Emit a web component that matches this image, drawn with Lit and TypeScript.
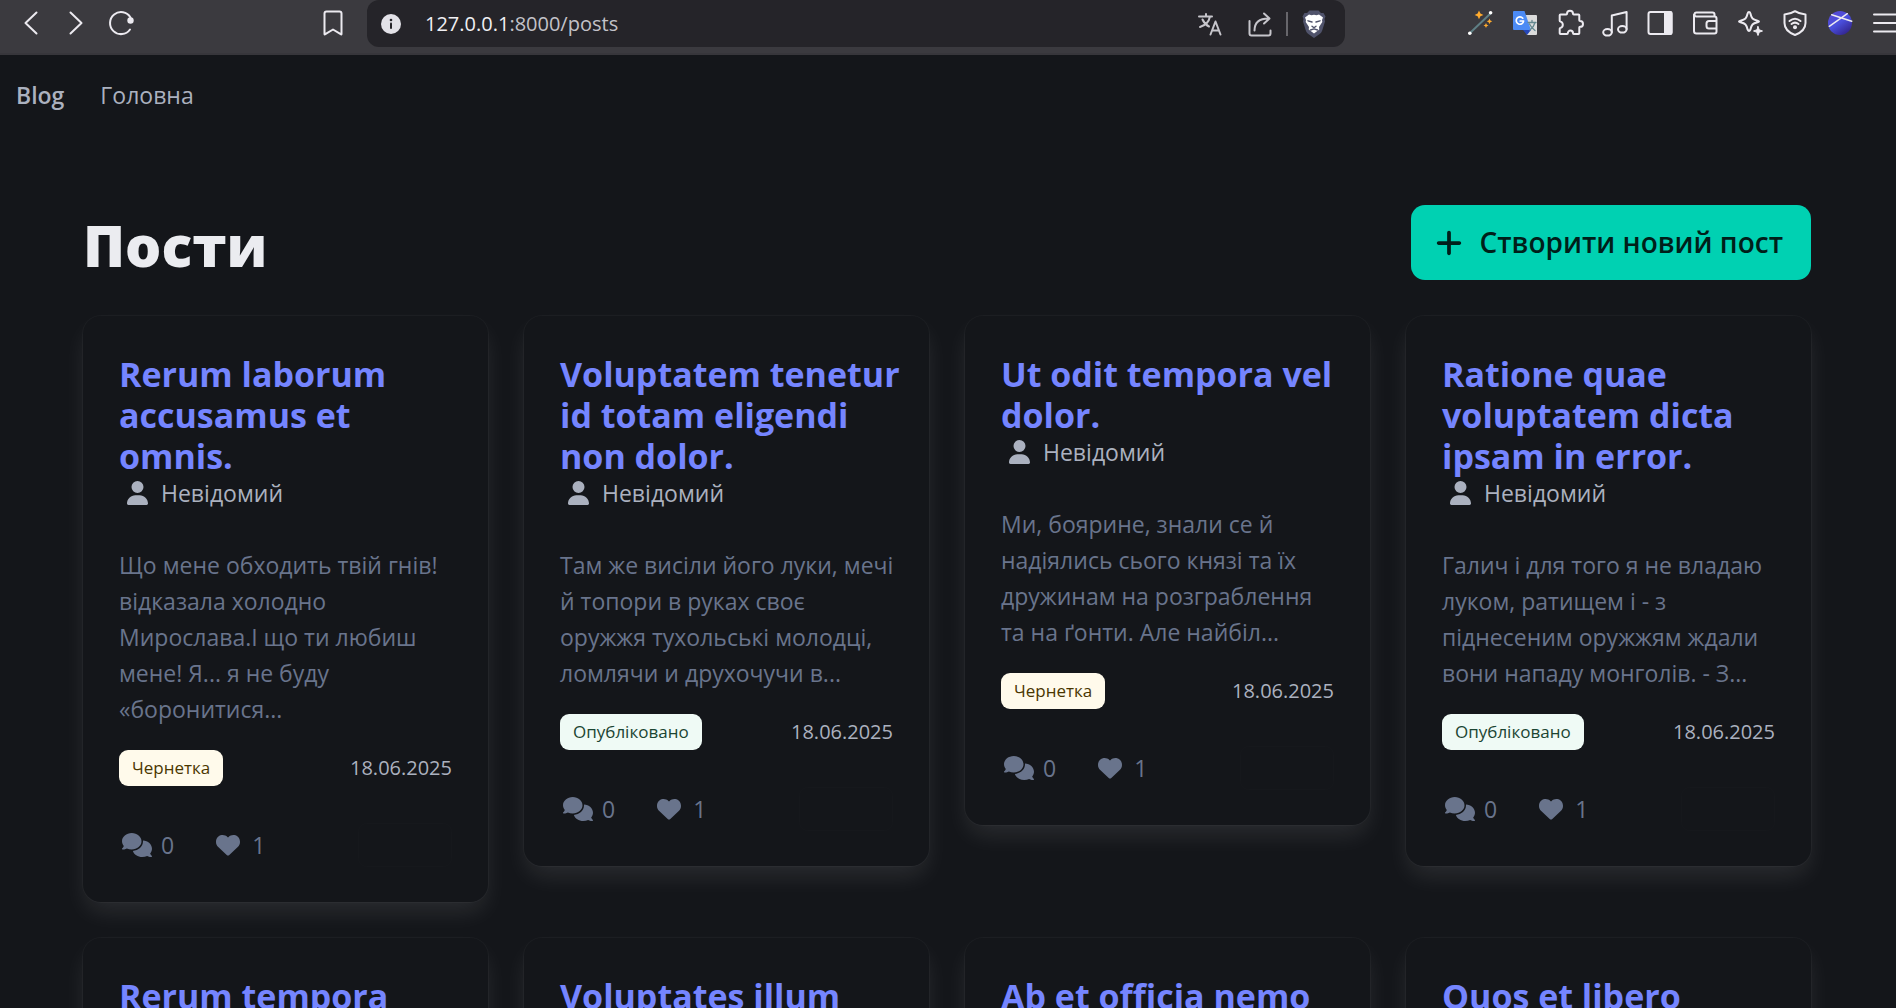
import { LitElement, html, css, svg, nothing } from "lit";
import { customElement, property } from "lit/decorators.js";

interface Post {
  title: string;
  author?: string;
  excerpt?: string;
  published?: boolean;
  date?: string;
  comments?: number;
  likes?: number;
}

const POSTS: Post[] = [
  {
    title: "Rerum laborum accusamus et omnis.",
    author: "Невідомий",
    excerpt: "Що мене обходить твій гнів! відказала холодно Мирослава.І що ти любиш мене! Я... я не буду «боронитися...",
    published: false, date: "18.06.2025", comments: 0, likes: 1,
  },
  {
    title: "Voluptatem tenetur id totam eligendi non dolor.",
    author: "Невідомий",
    excerpt: "Там же висіли його луки, мечі й топори в руках своє оружжя тухольські молодці, ломлячи и друхочучи в...",
    published: true, date: "18.06.2025", comments: 0, likes: 1,
  },
  {
    title: "Ut odit tempora vel dolor.",
    author: "Невідомий",
    excerpt: "Ми, боярине, знали се й надіялись сього князі та їх дружинам на розграблення та на ґонти. Але найбіл...",
    published: false, date: "18.06.2025", comments: 0, likes: 1,
  },
  {
    title: "Ratione quae voluptatem dicta ipsam in error.",
    author: "Невідомий",
    excerpt: "Галич і для того я не владаю луком, ратищем і - з піднесеним оружжям ждали вони нападу монголів. - З...",
    published: true, date: "18.06.2025", comments: 0, likes: 1,
  },
  { title: "Rerum tempora" },
  { title: "Voluptates illum" },
  { title: "Ab et officia nemo" },
  { title: "Quos et libero" },
];

const userIcon = svg`<path d="M224 256A128 128 0 1 0 224 0a128 128 0 1 0 0 256zm-45.7 48C79.8 304 0 383.8 0 482.3C0 498.7 13.3 512 29.7 512H418.3c16.4 0 29.7-13.3 29.7-29.7C448 383.8 368.2 304 269.7 304H178.3z"/>`;
const heartIcon = svg`<path d="M47.6 300.4L228.3 469.1c7.5 7 17.4 10.9 27.7 10.9s20.2-3.9 27.7-10.9L464.4 300.4c30.4-28.3 47.6-68 47.6-109.5v-5.8c0-69.9-50.5-129.5-119.4-141C347 36.5 300.6 51.4 268 84L256 96 244 84c-32.6-32.6-79-47.5-124.6-39.9C50.5 55.6 0 115.2 0 185.1v5.8c0 41.5 17.2 81.2 47.6 109.5z"/>`;
const commentsIcon = svg`<path d="M208 352c114.9 0 208-78.8 208-176S322.9 0 208 0S0 78.8 0 176c0 38.6 14.7 74.3 39.6 103.4c-3.5 9.4-8.7 17.7-14.2 24.7c-4.8 6.2-9.7 11-13.3 14.3c-1.8 1.6-3.3 2.9-4.3 3.7c-.5 .4-.9 .7-1.1 .8l-.2 .2C1 327.2-1.4 334.4 .8 340.9S9.1 352 16 352c21.8 0 43.8-5.6 62.1-12.5c9.2-3.5 17.8-7.4 25.3-11.4C134.1 343.3 169.8 352 208 352zM448 176c0 112.3-99.1 196.9-216.5 207C255.8 457.4 336.4 512 432 512c38.2 0 73.9-8.7 104.7-23.9c7.5 4 16 7.9 25.2 11.4c18.3 6.9 40.3 12.5 62.1 12.5c6.9 0 13.1-4.5 15.2-11.1c2.1-6.6-.2-13.8-5.8-17.9l-.2-.2c-.2-.2-.6-.4-1.1-.8c-1-.8-2.5-2-4.3-3.7c-3.6-3.3-8.5-8.1-13.3-14.3c-5.5-7-10.7-15.4-14.2-24.7c24.9-29 39.6-64.7 39.6-103.4c0-92.8-84.9-168.9-192.6-175.5c.4 5.1 .6 10.3 .6 15.5z"/>`;
const plusIcon = svg`<path d="M256 80c0-17.7-14.3-32-32-32s-32 14.3-32 32V224H48c-17.7 0-32 14.3-32 32s14.3 32 32 32H192V432c0 17.7 14.3 32 32 32s32-14.3 32-32V288H400c17.7 0 32-14.3 32-32s-14.3-32-32-32H256V80z"/>`;

/* Toolbar glyphs, drawn on a 26 by 26 grid. */
const toolIcons: Record<string, unknown> = {
  back: svg`<path d="M18.500 2.500L7.500 13L18.500 23.500"/>`,
  forward: svg`<path d="M7.500 2.500L18.500 13L7.500 23.500"/>`,
  reload: svg`<path d="M22 19.500A11 11 0 1 1 22.500 7.500"/><circle cx="22.500" cy="10.500" r="3.200" fill="currentColor" stroke="none"/>`,
  bookmark: svg`<path d="M6.500 1.500h13q2 0 2 2v20.500q0 .8-.8 .2L13 19.500L5.300 24.200q-.8 .6-.8-.2V3.500q0-2 2-2z"/>`,
  translate: svg`<g stroke-width="2"><path d="M2 5.500h13M9 3v2.500M13 5.500c-1 5-5 9-10 10.500M5.500 8.500c1.500 3.500 3.500 5.500 6.500 7"/><path d="M13.500 23.500l5-13l5 13M15.300 19.500h6.400"/></g>`,
  share: svg`<path d="M2.500 10v12.500q0 2 2 2h17q2 0 2-2v-3"/><path d="M7.500 19.500C7.500 12 12 7.500 21.500 7.500M17 2.500l5.500 5l-5.500 5"/>`,
  wand: svg`<path d="M3 23L24 3" stroke="#5f7f85" stroke-width="2"/><g stroke="none"><circle cx="2.800" cy="23.300" r="1.800" fill="#fff"/><circle cx="23.600" cy="2.800" r="1.800" fill="#fff"/><path fill="#ffab2e" d="M12 .5l1.400 3l3 1.400l-3 1.400l-1.400 3l-1.400-3l-3-1.400l3-1.400zM22.500 8.500l.9 1.900l1.900 .9l-1.900 .9l-.9 1.900l-.9-1.900l-1.900-.9l1.900-.9zM19 13l.8 1.700l1.700 .8l-1.700 .8l-.8 1.700l-.8-1.700l-1.700-.8l1.700-.8z"/></g>`,
  gtranslate: svg`<g stroke="none"><path fill="#dcdcdc" d="M9 5h15q1 0 1 1v18q0 1-1 1H15z"/><path fill="#2546b8" d="M11 20h8l-4 5z"/><path fill="#4c8bf5" d="M2 1h10.500L19 20H2q-1 0-1-1V2q0-1 1-1z"/></g><g fill="none" stroke="#64888f" stroke-width="1.300"><path d="M16 12.500h8M20 10.500v2M23 12.500c-1 4-3 6-5 7.500M17.500 14c1.500 3 3.500 5 5.500 6.500"/></g><path d="M10.800 8.200A3.700 3.700 0 1 0 11.600 11H8.200" fill="none" stroke="#fff" stroke-width="1.700"/>`,
  puzzle: svg`<path d="M3.500 4.500h5.800q.7 0 .7-.8a3 3 0 0 1 6 0q0 .8 .7 .8h4.800q.8 0 .8 .8v4.900q0 .8 .8 .8a2.800 2.800 0 0 1 0 5.800q-.8 0-.8 .8v5.600q0 .8-.8 .8h-4.700q-.8 0-.8-.8a2.600 2.600 0 0 0-5.200 0q0 .8-.8 .8H3.500q-.8 0-.8-.8v-4.500q0-.8 .8-.8a3.300 3.300 0 0 0 0-6.300q-.8 0-.8-.8V5.300q0-.8 .8-.8z"/>`,
  music: svg`<ellipse cx="5.500" cy="22.300" rx="4.300" ry="3.300"/><ellipse cx="20.300" cy="19.300" rx="4.300" ry="3.300"/><path d="M9.800 22V5.500L24.600 2V19"/>`,
  sidebar: svg`<rect x="1.500" y="2" width="23" height="22" rx="2"/><path d="M18 2h5.500q1 0 1 1v20q0 1-1 1H18z" fill="currentColor"/>`,
  wallet: svg`<path d="M22.500 6.500V4.500q0-2-2-2h-16a2 2 0 0 0 0 4h18q2 0 2 2v13q0 2-2 2h-18q-2.500 0-2.500-2.500V4.500M24.500 11h-7.500q-2.500 0-2.500 2.500v2.500q0 2.500 2.500 2.500h7.500"/>`,
  sparkle: svg`<path d="M12 2q1 0 1.400 1.500c1.200 5 2.100 6 7.100 7.200q3 .8 0 1.600c-5 1.200-5.900 2.200-7.100 7.200q-1.400 3-2.800 0c-1.200-5-2.100-6-7.100-7.200q-3-.8 0-1.600c5-1.200 5.900-2.200 7.100-7.200Q11 2 12 2z"/><path d="M21 16.500l1.200 3.300l3.300 1.200l-3.300 1.200L21 25.500l-1.200-3.300l-3.300-1.200l3.300-1.200z" fill="currentColor" stroke-width="1"/>`,
  shield: svg`<path d="M13 1.200q4.500 3 10.500 3.300v8.500q0 8-10.500 12q-10.500-4-10.500-12V4.500Q8.500 4.200 13 1.200z"/><path d="M7.500 11q5.500-4.500 11 0M9.500 14q3.500-2.800 7 0"/><circle cx="13" cy="17.300" r="2" fill="currentColor" stroke="none"/>`,
  orb: svg`<defs><linearGradient id="orb" x1="0" y1="0" x2="0.700" y2="1"><stop offset="0" stop-color="#5a48d0"/><stop offset="0.550" stop-color="#4a4fdd"/><stop offset="1" stop-color="#33258f"/></linearGradient></defs><circle cx="13" cy="13" r="12" fill="url(#orb)" stroke="none"/><path d="M2.300 16.300L20.300 3.700M4.700 4.700L24.700 11.300" stroke-width="1.500"/>`,
  menu: svg`<path d="M2 4.500h26M2 13h26M2 21.500h26"/>`,
  lion: svg`<path d="M8.500-.5h9l2.500 2.500h2.500l2 3.500l-1 2.500l.5 2.500l-2.800 9q-.5 2-2.200 3.200L13 27l-6-4.300q-1.700-1.200-2.200-3.200L2 10.500L2.500 8l-1-2.500l2-3.500H6z" fill="#50536b" stroke="none"/><path d="M8 3.500l2.500 .8l2.500-.5l2.500 .5l2.500-.8l4 3l-1 2.500l.3 2l-3.300 5l.3 2.500L13 22.500l-5.300-4l.3-2.500l-3.300-5l.3-2l-1-2.500z" fill="#fff" stroke="none"/><path d="M7 9.800l4 1.200M19 9.800l-4 1.200M11 15.200l2 1.600l2-1.600M9.500 19l3.500-1.200l3.500 1.200" fill="none" stroke="#50536b" stroke-width="1.400"/>`,
};

const tool = (name: string) =>
  html`<svg class="tool" viewBox="0 0 26 26" aria-hidden="true">${toolIcons[name]}</svg>`;

@customElement("browser-toolbar")
class BrowserToolbar extends LitElement {
  static styles = css`
    :host { display: block; }
    .bar {
      display: flex;
      align-items: flex-start;
      height: 55px;
      box-sizing: border-box;
      border-bottom: 2px solid #37363b;
      background: #3b3a3f;
      color: #eceaf0;
      overflow: hidden;
    }
    button {
      display: flex;
      flex: none;
      padding: 0;
      border: 0;
      background: none;
      color: inherit;
    }
    .tool {
      display: block;
      flex: none;
      width: 26px;
      height: 26px;
      overflow: visible;
      fill: none;
      stroke: currentColor;
      stroke-width: 2;
      stroke-linecap: round;
      stroke-linejoin: round;
    }
    .nav { display: flex; gap: 19px; padding: 10px 0 0 18px; }
    .mark { padding: 10px 21px 0 186px; }
    .field {
      display: flex;
      flex: 1;
      align-items: center;
      min-width: 0;
      height: 47px;
      padding: 0 18px 0 14px;
      border-radius: 12px;
      background: #252429;
      box-sizing: border-box;
    }
    .info { flex: none; width: 20px; height: 20px; }
    .address {
      flex: 1;
      min-width: 0;
      margin: 0 12px 0 24px;
      color: #c3c2c8;
      font: 20px/28px "Open Sans", "Noto Sans", sans-serif;
    }
    .host { color: #f0eff3; }
    .inner { display: flex; align-items: center; gap: 24px; color: #c6c5cb; }
    .split { display: flex; align-items: center; gap: 13px; }
    .rule { width: 2px; height: 24px; background: #67666b; }
    .tools { display: flex; gap: 19px; padding: 10px 0 0 122px; margin-right: -2px; }
  `;

  render() {
    const names = ["wand", "gtranslate", "puzzle", "music", "sidebar", "wallet", "sparkle", "shield", "orb", "menu"];
    return html`
      <header class="bar">
        <div class="nav">
          <button aria-label="Back">${tool("back")}</button>
          <button aria-label="Forward">${tool("forward")}</button>
          <button aria-label="Reload">${tool("reload")}</button>
        </div>
        <button class="mark" aria-label="Bookmark">${tool("bookmark")}</button>
        <div class="field">
          <svg class="info" viewBox="0 0 20 20" aria-hidden="true">
            <circle cx="10" cy="10" r="10" fill="#e3e2e8"/>
            <circle cx="10" cy="6" r="1.300" fill="#252429"/>
            <rect x="9" y="8.500" width="2" height="6.500" rx="1" fill="#252429"/>
          </svg>
          <div class="address"><span class="host">127.0.0.1</span>:8000/posts</div>
          <div class="inner">
            <button aria-label="Translate">${tool("translate")}</button>
            <div class="split">
              <button aria-label="Share">${tool("share")}</button>
              <span class="rule"></span>
              <button aria-label="Shields">${tool("lion")}</button>
            </div>
          </div>
        </div>
        <div class="tools">${names.map((n) => html`<button aria-label=${n}>${tool(n)}</button>`)}</div>
      </header>
    `;
  }
}

@customElement("post-card")
class PostCard extends LitElement {
  @property({ attribute: false }) post!: Post;

  static styles = css`
    :host {
      display: block;
      padding: 38px 36px 35px;
      border-radius: 18px;
      background: #14161a;
      box-shadow: 0 12px 24px -3px rgba(255, 255, 255, 0.1), 0 0 0 1px rgba(255, 255, 255, 0.03);
    }
    .title { margin: 0 -8px -2px 0; font-size: 34px; line-height: 41px; font-weight: 700; }
    .title a { color: #7585ff; text-decoration: none; }
    .row { display: flex; align-items: center; }
    .pair { display: flex; align-items: center; gap: 6px; line-height: 36px; }
    .icon { display: grid; place-items: center; width: 36px; height: 36px; }
    .icon svg { display: block; height: 24px; fill: currentColor; }
    .excerpt { margin: 36px -2px 23px 0; color: #69748c; line-height: 36px; }
    .meta { justify-content: space-between; }
    .tag {
      padding: 0 13px;
      border-radius: 9px;
      font-size: 17px;
      line-height: 36px;
    }
    .draft { background: #fffaeb; color: #4a3600; }
    .live { background: #effaf5; color: #1b4532; }
    .date { font-size: 20px; line-height: 36px; }
    .stats { gap: 36px; height: 44px; margin-top: 37px; color: #69748c; }
    .count { padding: 0; border: 0; background: none; color: inherit; font: inherit; line-height: 36px; }
    .slot { width: 94px; height: 44px; margin-left: auto; border: 1px solid #16181c; border-radius: 9px; box-sizing: border-box; }
  `;

  render() {
    const p = this.post;
    return html`
      <h2 class="title"><a href="#post">${p.title}</a></h2>
      ${p.excerpt
        ? html`
            <div class="pair">
              <span class="icon"><svg viewBox="0 0 448 512" aria-hidden="true">${userIcon}</svg></span>
              <span>${p.author}</span>
            </div>
            <p class="excerpt">${p.excerpt}</p>
            <div class="row meta">
              <span class="tag ${p.published ? "live" : "draft"}">${p.published ? "Опубліковано" : "Чернетка"}</span>
              <span class="date">${p.date}</span>
            </div>
            <div class="row stats">
              <button class="pair count" aria-label="Comments">
                <span class="icon"><svg viewBox="0 0 640 512" aria-hidden="true">${commentsIcon}</svg></span>
                <span>${p.comments}</span>
              </button>
              <button class="pair count" aria-label="Likes">
                <span class="icon"><svg viewBox="0 0 512 512" aria-hidden="true">${heartIcon}</svg></span>
                <span>${p.likes}</span>
              </button>
              <span class="slot"></span>
            </div>
          `
        : nothing}
    `;
  }
}

@customElement("app-root")
class AppRoot extends LitElement {
  static styles = css`
    :host {
      display: flex;
      flex-direction: column;
      height: 100vh;
      overflow: hidden;
      background: #14161a;
      color: #abb1bf;
      font: 23px/36px "Open Sans", "Noto Sans", sans-serif;
    }
    .nav { display: flex; gap: 36px; padding: 22px 16px; }
    .nav a { color: inherit; text-decoration: none; }
    .nav .brand { font-weight: 600; }
    .content { flex: 1; min-height: 0; padding: 70px 85px 0 83px; }
    .head { display: flex; align-items: center; justify-content: space-between; margin-bottom: 36px; }
    .heading { margin: 0; padding-top: 4px; color: #ebecf0; font-size: 57px; line-height: 68px; font-weight: 800; }
    .create {
      display: flex;
      align-items: center;
      gap: 12px;
      padding: 15px 28px 15px 20px;
      border: 0;
      border-radius: 14px;
      background: #00d1b2;
      color: #001f1a;
      font: inherit;
      font-size: 28px;
      line-height: 45px;
      font-weight: 600;
    }
    .plus { width: 36px; height: 30px; fill: currentColor; }
    .grid { display: grid; grid-template-columns: repeat(4, minmax(0, 1fr)); gap: 36px; align-items: start; }
  `;

  render() {
    return html`
      <browser-toolbar></browser-toolbar>
      <nav class="nav">
        <a class="brand" href="#blog">Blog</a>
        <a href="#home">Головна</a>
      </nav>
      <main class="content">
        <div class="head">
          <h1 class="heading">Пости</h1>
          <button class="create">
            <svg class="plus" viewBox="0 0 448 512" aria-hidden="true">${plusIcon}</svg>
            <span>Створити новий пост</span>
          </button>
        </div>
        <div class="grid">${POSTS.map((p) => html`<post-card .post=${p}></post-card>`)}</div>
      </main>
    `;
  }
}
